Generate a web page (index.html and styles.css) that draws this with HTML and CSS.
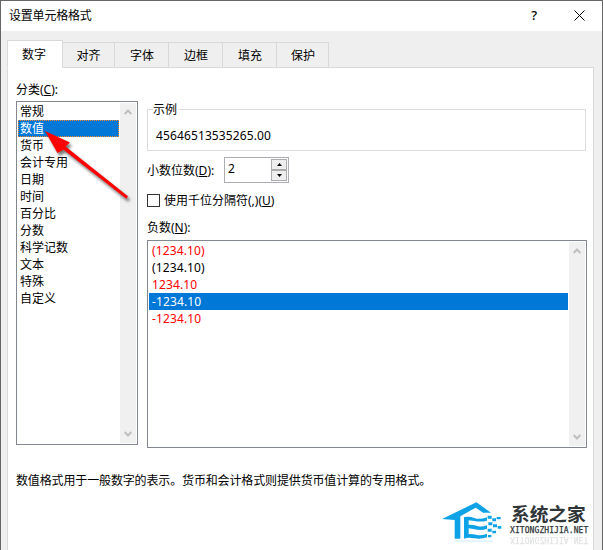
FILE: index.html
```html
<!DOCTYPE html>
<html lang="zh-CN">
<head>
<meta charset="utf-8">
<title>设置单元格格式</title>
<link rel="stylesheet" href="styles.css">
</head>
<body>
<div class="dialog">
  <header class="titlebar">
    <h1>设置单元格格式</h1>
    <span class="help">?</span>
    <svg class="close" width="11" height="11" viewBox="0 0 11 11"><path d="M.5.5l10 10M10.5.5l-10 10"/></svg>
  </header>
  <nav class="tabs">
    <span class="tab active">数字</span><span class="tab">对齐</span><span class="tab">字体</span><span class="tab">边框</span><span class="tab">填充</span><span class="tab">保护</span>
  </nav>
  <main class="panel">
    <div class="columns">
      <section class="left">
        <label class="label">分类(<u>C</u>):</label>
        <div class="listbox categories">
          <ul>
            <li>常规</li><li class="selected focus">数值</li><li>货币</li><li>会计专用</li><li>日期</li><li>时间</li><li>百分比</li><li>分数</li><li>科学记数</li><li>文本</li><li>特殊</li><li>自定义</li>
          </ul>
          <div class="scroll">
            <svg width="8" height="6" viewBox="0 0 8 6"><path d="M.7 5L4 1.5 7.3 5"/></svg>
            <svg width="8" height="6" viewBox="0 0 8 6"><path d="M.7 1L4 4.5 7.3 1"/></svg>
          </div>
        </div>
      </section>
      <section class="right">
        <fieldset class="sample"><legend>示例</legend><span>45646513535265.00</span></fieldset>
        <div class="decimals">
          <span class="label">小数位数(<u>D</u>):</span>
          <div class="spinner"><span>2</span>
            <div class="buttons">
              <i><svg width="5" height="3" viewBox="0 0 5 3"><path d="M0 3L2.5 0 5 3z"/></svg></i>
              <i><svg width="5" height="3" viewBox="0 0 5 3"><path d="M0 0L2.5 3 5 0z"/></svg></i>
            </div>
          </div>
        </div>
        <div class="check"><span class="box"></span><span>使用千位分隔符(,)(<u>U</u>)</span></div>
        <div class="label negative-label">负数(<u>N</u>):</div>
        <div class="listbox negatives">
          <ul>
            <li class="red">(1234.10)</li><li>(1234.10)</li><li class="red">1234.10</li><li class="selected">-1234.10</li><li class="red">-1234.10</li>
          </ul>
          <div class="scroll">
            <svg width="8" height="6" viewBox="0 0 8 6"><path d="M.7 5L4 1.5 7.3 5"/></svg>
            <svg width="8" height="6" viewBox="0 0 8 6"><path d="M.7 1L4 4.5 7.3 1"/></svg>
          </div>
        </div>
      </section>
    </div>
    <p class="hint">数值格式用于一般数字的表示。货币和会计格式则提供货币值计算的专用格式。</p>
  </main>
</div>
<svg class="arrow" width="110" height="100" viewBox="0 0 110 100"><path d="M5 11L30 22.5 25.5 26.5 88 76.2 86.3 78.8 23.5 29.8 17.5 33z"/></svg>
<div class="brand">
  <svg class="house" width="62" height="46" viewBox="12 12 186 138">
    <path d="M12 63L115 13 159 44H135L113 29 67 55V122H50V66z"/>
    <path d="M78 57Q95 54 109 60T147 58V68Q128 73 109 69L92 67V80Q108 80 118 84T147 82V93Q128 98 110 94L92 91V108Q108 108 118 111T147 107V118Q128 125 109 121T78 122z"/>
    <path d="M149 53h12v9h-12zM163 61h11v9h-11zM176 57h12v7h-12zM151 73h12v9h-12zM165 79h12v9h-12zM179 84h11v8h-11zM149 92h12v9h-12zM163 98h11v8h-11zM150 111h10v7h-10z"/>
    <path class="shade" d="M48 127H165V133H48z"/>
  </svg>
  <div class="wordmark"><b>系统之家</b><span>XITONGZHIJIA.NET</span><span class="mirror" aria-hidden="true">XITONGZHIJIA.NET</span></div>
</div>
</body>
</html>
```
FILE: styles.css
```css
* { box-sizing: border-box; margin: 0; padding: 0; }
body { width: 603px; height: 550px; overflow: hidden; position: relative; background: #efefef; font: 12px/17px "Noto Sans", "Noto Sans CJK SC", sans-serif; color: #000; }
.dialog { width: 603px; height: 550px; border: 1px solid #666; border-bottom: 0; display: flex; flex-direction: column; }
.titlebar { height: 30px; flex: none; background: #fff; display: flex; align-items: center; padding: 0 17px 2px 8px; }
h1 { font-size: 12px; font-weight: 400; flex: 1; letter-spacing: -.2px; }
.help { font-size: 13px; font-weight: 500; margin-right: 37px; }
.close { stroke: #000; stroke-width: 1; }
.tabs { display: flex; align-items: flex-end; height: 37px; flex: none; padding: 8px 0 0 6px; position: relative; z-index: 1; }
.tab { width: 54px; height: 26px; border: 1px solid #d9d9d9; border-left: 0; display: flex; align-items: center; justify-content: center; padding: 1px 0 0 1px; }
.tab:last-child { width: 52px; }
.tab:nth-child(2) { width: 52px; padding-left: 0; }
.tab.active { width: 56px; height: 28px; background: #fff; border-left: 1px solid #d9d9d9; border-bottom-color: #fff; padding: 1px 2px 0 0; }
.panel { margin: -1px 8px 0 6px; background: #fff; border: 1px solid #d9d9d9; border-bottom: 0; flex: 1; padding: 13px 6px 0 8px; }
.columns { display: flex; gap: 9px; height: 367px; }
.left { width: 122px; }
.left .label { display: block; height: 20px; }
.listbox { border: 1px solid #828790; padding: 1px; display: flex; }
.listbox ul { list-style: none; flex: 1; margin-right: 1px; }
.listbox li { height: 17px; padding-left: 2px; line-height: 17px; }
.categories { height: 344px; }
.selected { background: #0078d7; color: #fff; }
.focus { outline: 1px dotted #ff8728; outline-offset: -1px; }
.scroll { width: 16px; background: #f0f0f0; display: flex; flex-direction: column; justify-content: space-between; align-items: center; padding: 6px 0; }
.scroll path { fill: none; stroke: #bfbfbf; stroke-width: 2; }
.right { width: 440px; }
.sample { width: 439px; height: 42px; margin-top: 28px; border: 1px solid #dcdcdc; position: relative; padding: 17px 0 0 8px; letter-spacing: .12px; }
.sample legend { position: absolute; left: 5px; top: -9px; background: #fff; padding-right: 2px; }
.decimals { display: flex; align-items: center; height: 26px; margin-top: 6px; }
.decimals .label { width: 77px; }
.spinner { width: 65px; height: 26px; border: 1px solid #abadb3; padding: 1px; display: flex; justify-content: space-between; }
.spinner span { padding: 1px 0 0 2px; }
.buttons { width: 16px; display: flex; flex-direction: column; }
.buttons i { flex: 1; border: 1px solid #acacac; background: #eee; display: flex; align-items: center; justify-content: center; }
.check { display: flex; align-items: center; height: 17px; margin-top: 9px; }
.box { width: 13px; height: 13px; border: 1px solid #333; margin-right: 4px; }
.negative-label { margin-top: 10px; height: 17px; }
.negatives { height: 208px; margin-top: 4px; }
.negatives li { padding-left: 3px; letter-spacing: .12px; }
.red { color: #f00; }
.hint { margin-top: 24px; white-space: nowrap; letter-spacing: -.14px; }
.arrow { position: absolute; left: 40px; top: 120px; fill: #f00; filter: drop-shadow(2px 3px 1.5px #0008); }
.brand { position: absolute; left: 442px; top: 502px; display: flex; }
.house { fill: #0fa2e6; }
.house .shade { opacity: .12; }
.wordmark { margin: -2px 0 0 5px; width: 80px; color: #303538; }
.wordmark b { display: block; padding-left: 2px; font: 700 18.7px/25px "Noto Sans CJK SC", sans-serif; white-space: nowrap; }
.wordmark span { display: block; padding-left: 1px; font: 400 8px/12px "DejaVu Sans Mono", monospace; letter-spacing: .08px; white-space: nowrap; -webkit-text-stroke: .25px currentColor; }
.wordmark .mirror { transform: scaleY(-1); margin-top: -4px; opacity: .14; }
```
